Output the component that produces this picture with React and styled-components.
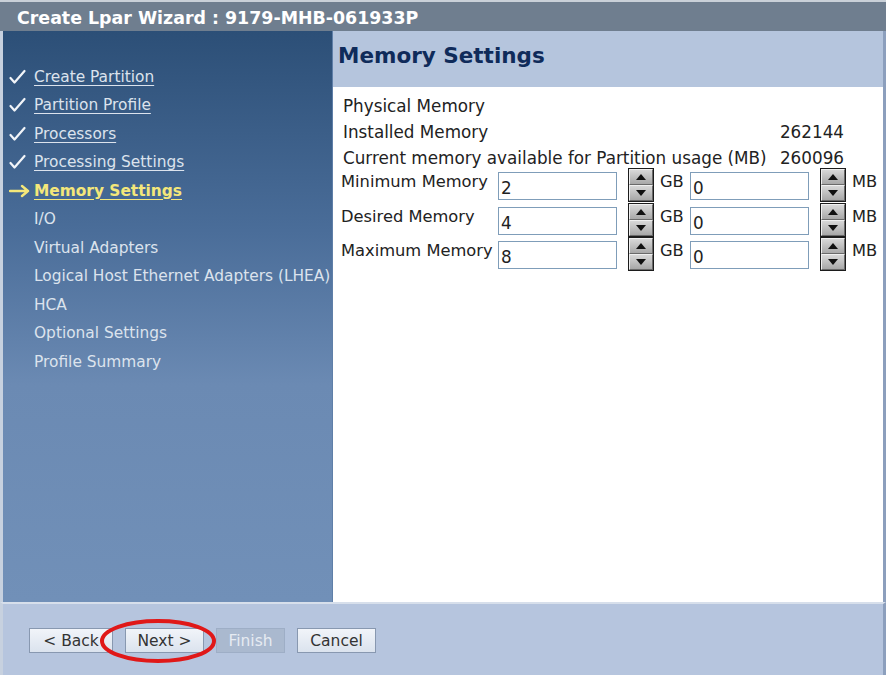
import React from "react";
import styled, { createGlobalStyle } from "styled-components";

const GlobalStyle = createGlobalStyle`
  html, body {
    margin: 0;
    padding: 0;
    background: #ffffff;
  }
  body {
    font-family: "DejaVu Sans", Verdana, sans-serif;
  }
`;

const Window = styled.div`
  position: relative;
  width: 886px;
  background: #ffffff;
`;

const TitleBar = styled.div`
  height: 29px;
  border-top: 2px solid #c9d0d8;
  background: #6f7e8f;
  color: #ffffff;
  font-weight: bold;
  font-size: 17.4px;
  line-height: 33px;
  padding-left: 17px;
  overflow: hidden;
`;

const Body = styled.div`
  display: flex;
  height: 571px;
  border-right: 3px solid #8c9fbd;
`;

const Sidebar = styled.nav`
  width: 332px;
  flex-shrink: 0;
  border-left: 3px solid #c7d1df;
  background: linear-gradient(180deg, #2c4f77 0%, #4a6d99 35%, #6b8ab3 62%, #7190b8 100%);
  padding-top: 36px;
  box-sizing: border-box;
  display: flex;
  flex-direction: column;
  gap: 9.5px;
`;

const Step = styled.div`
  display: flex;
  align-items: center;
  height: 19px;
  font-size: 15.4px;
  color: ${p => (p.$current ? "#f4e77a" : "#dce3ed")};
  font-weight: ${p => (p.$current ? "bold" : "normal")};
  white-space: nowrap;
`;

const StepText = styled.span`
  text-decoration: ${p => (p.$underline ? "underline" : "none")};
  text-underline-offset: 3px;
`;

const StepMark = styled.span`
  width: 31px;
  flex-shrink: 0;
  padding-left: 6px;
  box-sizing: border-box;
  display: inline-flex;
  align-items: center;
`;

const Main = styled.section`
  flex: 1;
  display: flex;
  flex-direction: column;
  border-left: 1px solid #5f7fa8;
`;

const Header = styled.h1`
  margin: 0;
  height: 56px;
  background: #b5c5dd;
  color: #0f2b5a;
  font-size: 21.5px;
  font-weight: bold;
  padding: 12px 0 0 5px;
  box-sizing: border-box;
`;

const Content = styled.div`
  padding: 6px 0 0 10px;
  font-size: 16.8px;
  color: #222222;
`;

const InfoRow = styled.div`
  display: flex;
  justify-content: space-between;
  width: 501px;
  height: 26px;
  line-height: 26px;
`;

const Fields = styled.div`
  margin-top: -3px;
`;

const FieldRow = styled.div`
  display: flex;
  align-items: flex-start;
  height: 34.5px;
`;

const FieldLabel = styled.span`
  width: 157px;
  margin-left: -2px;
  padding-top: 3px;
  font-size: 16.3px;
  line-height: 22px;
  white-space: nowrap;
`;

const NumberInput = styled.div`
  width: 119px;
  height: 28px;
  margin-top: 4px;
  border: 1px solid #7f9db9;
  background: #ffffff;
  padding: 5px 0 0 2px;
  box-sizing: border-box;
  line-height: 20px;
`;

const Spinner = styled.div`
  width: 24px;
  margin-left: 11px;
  border: 1px solid #1c1c1c;
  display: flex;
  flex-direction: column;
  background: #b5b5b5;
`;

const SpinButton = styled.div`
  height: 16px;
  display: flex;
  align-items: center;
  justify-content: center;
  background: linear-gradient(180deg, #d8d8d8, #a8a8a8);
  border: 1px solid #f0f0f0;
  border-right-color: #6a6a6a;
  border-bottom-color: #6a6a6a;
  box-sizing: border-box;
`;

const Unit = styled.span`
  margin-left: 6px;
  width: 30px;
  padding-top: 3px;
  font-size: 16.3px;
  line-height: 22px;
`;

const Footer = styled.div`
  height: 73px;
  background: #b6c5de;
  border-top: 2px solid #d7dfeb;
  border-left: 3px solid #c7d1df;
  border-right: 3px solid #8c9fbd;
  box-sizing: border-box;
  display: flex;
  align-items: center;
  gap: 12px;
  padding: 2px 0 0 26px;
`;

const Button = styled.button`
  width: ${p => p.$w || 79}px;
  height: 25px;
  font-family: "DejaVu Sans", Verdana, sans-serif;
  font-size: 15.5px;
  color: ${p => (p.disabled ? "#e6ebf2" : "#333333")};
  background: ${p => (p.disabled ? "#aab9cf" : "linear-gradient(180deg, #f1f4f9, #dbe3ee)")};
  border: 1px solid ${p => (p.disabled ? "#9eaec6" : "#8898b0")};
  padding: 0;
`;

const Annotation = styled.svg`
  position: absolute;
  left: 98px;
  top: 618px;
  pointer-events: none;
`;

const steps = [
  { label: "Create Partition", done: true },
  { label: "Partition Profile", done: true },
  { label: "Processors", done: true },
  { label: "Processing Settings", done: true },
  { label: "Memory Settings", current: true },
  { label: "I/O" },
  { label: "Virtual Adapters" },
  { label: "Logical Host Ethernet Adapters (LHEA)" },
  { label: "HCA" },
  { label: "Optional Settings" },
  { label: "Profile Summary" }
];

const fields = [
  { label: "Minimum Memory", gb: "2", mb: "0" },
  { label: "Desired Memory", gb: "4", mb: "0" },
  { label: "Maximum Memory", gb: "8", mb: "0" }
];

const Check = () => (
  <svg width="18" height="16" viewBox="0 0 18 16">
    <path d="M1.5 9 L5.5 13.5 L15.5 2" fill="none" stroke="#f2f5f9" strokeWidth="2.2" strokeLinecap="round" strokeLinejoin="round" />
  </svg>
);

const Arrow = () => (
  <svg width="22" height="14" viewBox="0 0 22 14">
    <path d="M1 7 H19 M13 2 L19 7 L13 12" fill="none" stroke="#f4e77a" strokeWidth="2.4" strokeLinecap="round" strokeLinejoin="round" />
  </svg>
);

const SpinArrows = () => (
  <Spinner>
    <SpinButton>
      <svg width="10" height="6" viewBox="0 0 10 6"><path d="M5 0 L10 6 H0 Z" fill="#111" /></svg>
    </SpinButton>
    <SpinButton>
      <svg width="10" height="6" viewBox="0 0 10 6"><path d="M0 0 H10 L5 6 Z" fill="#111" /></svg>
    </SpinButton>
  </Spinner>
);

export default function App() {
  return (
    <Window>
      <GlobalStyle />
      <TitleBar>Create Lpar Wizard : 9179-MHB-061933P</TitleBar>
      <Body>
        <Sidebar>
          {steps.map(s => (
            <Step key={s.label} $current={s.current}>
              <StepMark>{s.done ? <Check /> : s.current ? <Arrow /> : null}</StepMark>
              <StepText $underline={s.done || s.current}>{s.label}</StepText>
            </Step>
          ))}
        </Sidebar>
        <Main>
          <Header>Memory Settings</Header>
          <Content>
            <InfoRow><span>Physical Memory</span></InfoRow>
            <InfoRow><span>Installed Memory</span><span>262144</span></InfoRow>
            <InfoRow><span>Current memory available for Partition usage (MB)</span><span>260096</span></InfoRow>
            <Fields>
              {fields.map(f => (
                <FieldRow key={f.label}>
                  <FieldLabel>{f.label}</FieldLabel>
                  <NumberInput>{f.gb}</NumberInput>
                  <SpinArrows />
                  <Unit>GB</Unit>
                  <NumberInput>{f.mb}</NumberInput>
                  <SpinArrows />
                  <Unit>MB</Unit>
                </FieldRow>
              ))}
            </Fields>
          </Content>
        </Main>
      </Body>
      <Footer>
        <Button $w={84}>&lt; Back</Button>
        <Button $w={79}>Next &gt;</Button>
        <Button $w={69} disabled>Finish</Button>
        <Button $w={79}>Cancel</Button>
      </Footer>
      <Annotation width="120" height="48" viewBox="0 0 120 48">
        <ellipse cx="60" cy="23" rx="56" ry="20" fill="none" stroke="#e01818" strokeWidth="4" />
      </Annotation>
    </Window>
  );
}
